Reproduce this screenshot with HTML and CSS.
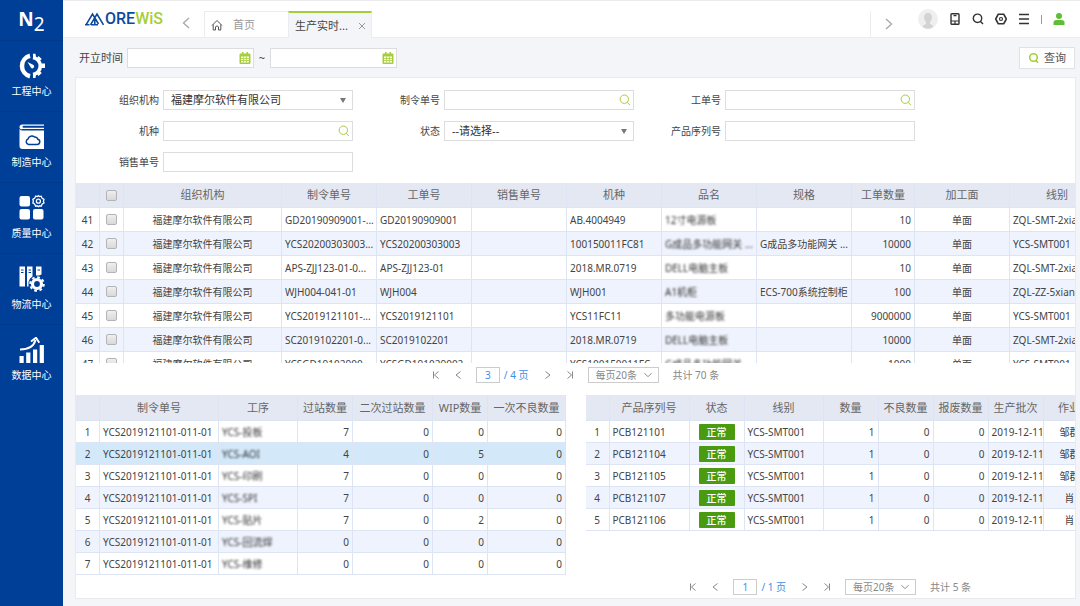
FILE: index.html
```html
<!DOCTYPE html>
<html lang="zh-CN">

<head>
    <meta charset="UTF-8">
    <meta name="viewport" content="width=device-width, initial-scale=1.0">
    <title>生产实时查询</title>
    <link rel="stylesheet" href="styles.css">
</head>

<body>
    <svg class="defs" aria-hidden="true">
        <symbol id="i-search" viewBox="0 0 12 12">
            <circle cx="5.3" cy="5.2" r="4.2" fill="none" stroke="currentColor" />
            <path d="M8.3 8.4l2.5 2.6" fill="none" stroke="currentColor" />
        </symbol>
        <symbol id="i-calendar" viewBox="0 0 12 12">
            <path d="M1.5 1.5H3V0h1.5v1.5h3V0H9v1.5h1.5q1 0 1 1v8.500q0 1-1 1h-9q-1 0-1-1V2.500q0-1 1-1z" fill="currentColor" />
            <path d="M2 4.500h8v6H2z" fill="#fff" />
            <path d="M2 6.500h8M2 8.500h8M4.600 4.500v6M7.400 4.500v6" stroke="currentColor" stroke-width=".8" />
        </symbol>
        <symbol id="i-left" viewBox="0 0 8 12">
            <path d="M7 1L1.500 6 7 11" fill="none" stroke="currentColor" stroke-width="1.400" />
        </symbol>
        <symbol id="i-right" viewBox="0 0 8 12">
            <path d="M1 1l5.500 5L1 11" fill="none" stroke="currentColor" stroke-width="1.400" />
        </symbol>
        <symbol id="i-first" viewBox="0 0 8 8">
            <path d="M1.500.5v7M6.500.5L2.500 4l4 3.500" fill="none" stroke="currentColor" />
        </symbol>
        <symbol id="i-last" viewBox="0 0 8 8">
            <path d="M6.500.5v7M1.500.5l4 3.500-4 3.500" fill="none" stroke="currentColor" />
        </symbol>
        <symbol id="i-prev" viewBox="0 0 8 8">
            <path d="M6.500.5l-4.500 3.500 4.500 3.500" fill="none" stroke="currentColor" />
        </symbol>
        <symbol id="i-next" viewBox="0 0 8 8">
            <path d="M1.500.5L6 4 1.500 7.500" fill="none" stroke="currentColor" />
        </symbol>
        <symbol id="i-down" viewBox="0 0 8 8">
            <path d="M.5 2.200L4 5.700l3.500-3.500" fill="none" stroke="currentColor" />
        </symbol>
    </svg>

    <nav class="sidebar">
        <div class="brand">N<sub>2</sub></div>
        <a href="#" class="nav-item">
            <svg viewBox="0 0 26 26">
                <path d="M11 2.800A10.500 10.500 0 0 0 11 23.200" fill="none" stroke="#fff" stroke-width="4.500" />
                <path d="M14 4.500A8.600 8.600 0 0 1 14 21.500" fill="none" stroke="#fff" stroke-width="3.600" />
                <path d="M14 .8h2.500l.6 4H14zM19.500 3l3.300 3-3 2.500-2.500-2.500zM21 10.500h5v4.500h-5zM19.800 17.500l3 2.500-3.300 3-2.500-3zM14 21h3l-.5 4H14z" fill="#fff" />
                <path d="M8.500 9l6 3a1.800 1.800 0 1 1-2.500 2.800z" fill="#fff" />
            </svg>
            <span>工程中心</span>
        </a>
        <a href="#" class="nav-item">
            <svg viewBox="0 0 26 26">
                <path d="M3.500.5H25v1.200H4.500a1 1 0 0 0 0 2H25V5H3.500A2 2 0 0 1 .5 3Q.5.500 3.500.5z" fill="#fff" />
                <path d="M.5 5q1 1.500 3 1.500H25V25H3.500Q.5 25 .5 22z" fill="#fff" />
                <path d="M9.500 20.500h8.500a2.700 2.700 0 0 0 .8-5.300 3 3 0 0 0-3.300-2.200 4 4 0 0 0-6.500 2 2.900 2.900 0 0 0 .5 5.500z" fill="none" stroke="#003f98" stroke-width="1.500" />
            </svg>
            <span>制造中心</span>
        </a>
        <a href="#" class="nav-item">
            <svg viewBox="0 0 26 26">
                <rect x=".5" y="1" width="10.500" height="10.500" rx="2" fill="#fff" />
                <rect x=".5" y="14" width="10.500" height="10.500" rx="2" fill="#fff" />
                <rect x="14" y="14" width="10.500" height="10.500" rx="2" fill="#fff" />
                <path d="M16.600 1.200l1.600.4 1.200-.9 1.200.9 1.600-.4 1 2.200 1.800 1-.6 1.800.6 1.800-1.800 1-1 2.200-1.600-.4-1.200.9-1.200-.9-1.600.4-1-2.200-1.800-1 .6-1.800-.6-1.800 1.800-1z" fill="none" stroke="#fff" stroke-width="1.300" />
                <circle cx="19.400" cy="6.200" r="2" fill="none" stroke="#fff" stroke-width="1.300" />
            </svg>
            <span>质量中心</span>
        </a>
        <a href="#" class="nav-item">
            <svg viewBox="0 0 26 26">
                <path d="M.5.5H6v20H.5zM8 .5h5.500v10L11 12.500 9.500 16v4.500H8zM17 .5h5.500v8L20 9.500h-3z" fill="#fff" />
                <path d="M2 4h2.500M2 6.500h2.500M9.500 4H12M9.500 6.500H12M18.500 4H21" stroke="#003f98" />
                <circle cx="18" cy="18" r="4.500" fill="none" stroke="#fff" stroke-width="3.200" />
                <circle cx="18" cy="18" r="6.800" fill="none" stroke="#fff" stroke-width="2" stroke-dasharray="2.700 2.640" />
            </svg>
            <span>物流中心</span>
        </a>
        <a href="#" class="nav-item">
            <svg viewBox="0 0 26 26">
                <path d="M.5 19h4.200v7H.500zM7.200 15.500h4.200V26H7.200zM14 12.500h4.200V26H14zM20.700 8h4.200v18h-4.200z" fill="#fff" />
                <path d="M1 12.500Q14 12.500 16.500 3" fill="none" stroke="#fff" stroke-width="2" />
                <path d="M12 4.500L17 .8l3.300 5" fill="none" stroke="#fff" stroke-width="2" />
            </svg>
            <span>数据中心</span>
        </a>
    </nav>

    <div class="main">
        <header class="topbar">
            <a href="#" class="logo">
                <svg viewBox="0 0 20 14">
                    <path d="M1 12.800L7.500 2l6 10M5.500 12.800L12 2l6.500 10.800M0 12.800h4.500M6 12.800h7M9.800 7v5" fill="none" stroke="#0d4a9e" stroke-width="1.600" />
                </svg>
                <span class="logo-more">ORE</span><span class="logo-wis">WiS</span>
            </a>
            <button class="tab-scroll" aria-label="向左"><svg><use href="#i-left" /></svg></button>
            <div class="tabs">
                <a href="#" class="tab">
                    <svg viewBox="0 0 12 12">
                        <path d="M1 6.500L6 1.500l5 5M2.200 5.500V11h2.300V7.800q1.500-1.800 3 0V11h2.300V5.500" fill="none" stroke="#555" />
                    </svg>
                    <span>首页</span>
                </a>
                <div class="tab active">
                    <a href="#">生产实时...</a>
                    <button class="tab-close" aria-label="关闭">
                        <svg viewBox="0 0 8 8"><path d="M1 1l6 6M7 1L1 7" stroke="#999" /></svg>
                    </button>
                </div>
            </div>
            <div class="tools">
                <button class="tab-scroll" aria-label="向右"><svg><use href="#i-right" /></svg></button>
                <svg class="avatar" viewBox="0 0 20 20">
                    <circle cx="10" cy="10" r="10" fill="#efefef" />
                    <path d="M10 4q4 0 4 4.500 0 3-2 4.500v2l3 1.500v1.800a9.500 9.500 0 0 1-10 0V16.500L8 15v-2Q6 11.500 6 8.500 6 4 10 4z" fill="#d3d3d3" />
                </svg>
                <button class="tool" aria-label="手机">
                    <svg viewBox="0 0 12 12">
                        <rect x="2" y=".8" width="8" height="10.400" rx=".8" fill="none" stroke="#333" stroke-width="1.400" />
                        <path d="M2 8h8M4.500 2.700h3M6 8v3" stroke="#333" stroke-width="1.200" />
                    </svg>
                </button>
                <button class="tool" aria-label="搜索">
                    <svg viewBox="0 0 12 12">
                        <circle cx="5.500" cy="5.300" r="4.200" fill="none" stroke="#333" stroke-width="1.400" />
                        <path d="M8 8l3 3" stroke="#333" stroke-width="1.400" />
                    </svg>
                </button>
                <button class="tool" aria-label="设置">
                    <svg viewBox="0 0 12 12">
                        <path d="M3.300 1.200h5.400l1 1.800 1.700 3-1.700 3-1 1.800H3.300l-1-1.800L.6 6l1.700-3z" fill="none" stroke="#333" stroke-width="1.600" />
                        <circle cx="6" cy="6" r="1.500" fill="none" stroke="#333" stroke-width="1.200" />
                    </svg>
                </button>
                <button class="tool" aria-label="菜单">
                    <svg viewBox="0 0 12 12"><path d="M1 1.500h10M1 6h10M1 10.500h10" stroke="#333" stroke-width="1.400" /></svg>
                </button>
                <span class="divider"></span>
                <button class="tool" aria-label="用户">
                    <svg viewBox="0 0 12 12">
                        <circle cx="6" cy="3" r="3" fill="#5dbf35" />
                        <path d="M.5 12V9.500q0-2.500 3-2.500h5q3 0 3 2.500V12z" fill="#5dbf35" />
                    </svg>
                </button>
            </div>
        </header>

        <div class="toolbar">
            <label for="date-from">开立时间</label>
            <div class="field date">
                <input type="text" id="date-from">
                <svg><use href="#i-calendar" /></svg>
            </div>
            <span class="tilde">~</span>
            <div class="field date">
                <input type="text" id="date-to" aria-label="结束时间">
                <svg><use href="#i-calendar" /></svg>
            </div>
            <button class="query">
                <svg viewBox="0 0 12 12">
                    <circle cx="5.500" cy="5.500" r="3.800" fill="none" stroke="currentColor" stroke-width="1.600" />
                    <path d="M7.500 8l2.500 2.800" stroke="currentColor" stroke-width="1.600" />
                </svg>
                查询
            </button>
        </div>

        <main class="panel">
            <form class="filters">
                <div class="row">
                    <label for="org">组织机构</label>
                    <div class="field select"><select id="org"><option>福建摩尔软件有限公司</option></select></div>
                </div>
                <div class="row">
                    <label for="mo">制令单号</label>
                    <div class="field"><input type="text" id="mo"><svg><use href="#i-search" /></svg></div>
                </div>
                <div class="row">
                    <label for="wo">工单号</label>
                    <div class="field"><input type="text" id="wo"><svg><use href="#i-search" /></svg></div>
                </div>
                <div class="row">
                    <label for="model">机种</label>
                    <div class="field"><input type="text" id="model"><svg><use href="#i-search" /></svg></div>
                </div>
                <div class="row">
                    <label for="state">状态</label>
                    <div class="field select"><select id="state"><option>--请选择--</option></select></div>
                </div>
                <div class="row">
                    <label for="sn">产品序列号</label>
                    <div class="field"><input type="text" id="sn"></div>
                </div>
                <div class="row">
                    <label for="so">销售单号</label>
                    <div class="field"><input type="text" id="so"></div>
                </div>
            </form>

            <div class="grid-box">
                <table class="grid orders">
                    <colgroup>
                        <col class="w24"><col class="w24"><col class="w158"><col class="w95"><col class="w95"><col class="w95">
                        <col class="w95"><col class="w95"><col class="w95"><col class="w63"><col class="w95"><col class="w95">
                    </colgroup>
                    <thead>
                        <tr>
                            <th></th>
                            <th><input type="checkbox" aria-label="全选"></th>
                            <th>组织机构</th>
                            <th>制令单号</th>
                            <th>工单号</th>
                            <th>销售单号</th>
                            <th>机种</th>
                            <th>品名</th>
                            <th>规格</th>
                            <th>工单数量</th>
                            <th>加工面</th>
                            <th>线别</th>
                        </tr>
                    </thead>
                    <tbody>
                        <tr>
                            <td class="c">41</td>
                            <td class="c"><input type="checkbox" aria-label="选择41"></td>
                            <td class="c">福建摩尔软件有限公司</td>
                            <td>GD20190909001-...</td>
                            <td>GD20190909001</td>
                            <td></td>
                            <td>AB.4004949</td>
                            <td><span class="masked">12寸电源板</span></td>
                            <td></td>
                            <td class="n">10</td>
                            <td class="c">单面</td>
                            <td>ZQL-SMT-2xian</td>
                        </tr>
                        <tr>
                            <td class="c">42</td>
                            <td class="c"><input type="checkbox" aria-label="选择42"></td>
                            <td class="c">福建摩尔软件有限公司</td>
                            <td>YCS20200303003...</td>
                            <td>YCS20200303003</td>
                            <td></td>
                            <td>100150011FC81</td>
                            <td><span class="masked">G成品多功能网关 ...</span></td>
                            <td>G成品多功能网关 ...</td>
                            <td class="n">10000</td>
                            <td class="c">单面</td>
                            <td>YCS-SMT001</td>
                        </tr>
                        <tr>
                            <td class="c">43</td>
                            <td class="c"><input type="checkbox" aria-label="选择43"></td>
                            <td class="c">福建摩尔软件有限公司</td>
                            <td>APS-ZJJ123-01-0...</td>
                            <td>APS-ZJJ123-01</td>
                            <td></td>
                            <td>2018.MR.0719</td>
                            <td><span class="masked">DELL电脑主板</span></td>
                            <td></td>
                            <td class="n">10</td>
                            <td class="c">单面</td>
                            <td>ZQL-SMT-2xian</td>
                        </tr>
                        <tr>
                            <td class="c">44</td>
                            <td class="c"><input type="checkbox" aria-label="选择44"></td>
                            <td class="c">福建摩尔软件有限公司</td>
                            <td>WJH004-041-01</td>
                            <td>WJH004</td>
                            <td></td>
                            <td>WJH001</td>
                            <td><span class="masked">A1机柜</span></td>
                            <td>ECS-700系统控制柜</td>
                            <td class="n">100</td>
                            <td class="c">单面</td>
                            <td>ZQL-ZZ-5xian</td>
                        </tr>
                        <tr>
                            <td class="c">45</td>
                            <td class="c"><input type="checkbox" aria-label="选择45"></td>
                            <td class="c">福建摩尔软件有限公司</td>
                            <td>YCS2019121101-...</td>
                            <td>YCS2019121101</td>
                            <td></td>
                            <td>YCS11FC11</td>
                            <td><span class="masked">多功能电源板</span></td>
                            <td></td>
                            <td class="n">9000000</td>
                            <td class="c">单面</td>
                            <td>YCS-SMT001</td>
                        </tr>
                        <tr>
                            <td class="c">46</td>
                            <td class="c"><input type="checkbox" aria-label="选择46"></td>
                            <td class="c">福建摩尔软件有限公司</td>
                            <td>SC2019102201-0...</td>
                            <td>SC2019102201</td>
                            <td></td>
                            <td>2018.MR.0719</td>
                            <td><span class="masked">DELL电脑主板</span></td>
                            <td></td>
                            <td class="n">10000</td>
                            <td class="c">单面</td>
                            <td>ZQL-SMT-2xian</td>
                        </tr>
                        <tr>
                            <td class="c">47</td>
                            <td class="c"><input type="checkbox" aria-label="选择47"></td>
                            <td class="c">福建摩尔软件有限公司</td>
                            <td>YCSGD19102900...</td>
                            <td>YCSGD191029002</td>
                            <td></td>
                            <td>YCS100150011FC...</td>
                            <td><span class="masked">G成品多功能网关</span></td>
                            <td></td>
                            <td class="n">1000</td>
                            <td class="c">单面</td>
                            <td>YCS-SMT001</td>
                        </tr>
                    </tbody>
                </table>
            </div>
            <div class="pager">
                <button aria-label="首页"><svg><use href="#i-first" /></svg></button>
                <button aria-label="上一页"><svg><use href="#i-prev" /></svg></button>
                <input type="text" class="page-no" value="3" aria-label="页码">
                <span class="pages">/ 4 页</span>
                <button aria-label="下一页"><svg><use href="#i-next" /></svg></button>
                <button aria-label="末页"><svg><use href="#i-last" /></svg></button>
                <div class="page-size"><select aria-label="每页条数"><option>每页20条</option></select><svg><use href="#i-down" /></svg></div>
                <span class="total">共计 70 条</span>
            </div>

            <div class="details">
                <section class="stations">
                    <div class="grid-box">
                        <table class="grid small">
                            <colgroup>
                                <col class="w24"><col class="w119"><col class="w79"><col class="w55"><col class="w80"><col class="w55"><col class="w78">
                            </colgroup>
                            <thead>
                                <tr>
                                    <th></th>
                                    <th>制令单号</th>
                                    <th>工序</th>
                                    <th>过站数量</th>
                                    <th>二次过站数量</th>
                                    <th>WIP数量</th>
                                    <th>一次不良数量</th>
                                </tr>
                            </thead>
                            <tbody>
                                <tr>
                                    <td class="c">1</td><td>YCS2019121101-011-01</td><td><span class="masked">YCS-投板</span></td>
                                    <td class="n">7</td><td class="n">0</td><td class="n">0</td><td class="n">0</td>
                                </tr>
                                <tr class="selected">
                                    <td class="c">2</td><td>YCS2019121101-011-01</td><td><span class="masked">YCS-AOI</span></td>
                                    <td class="n">4</td><td class="n">0</td><td class="n">5</td><td class="n">0</td>
                                </tr>
                                <tr>
                                    <td class="c">3</td><td>YCS2019121101-011-01</td><td><span class="masked">YCS-印刷</span></td>
                                    <td class="n">7</td><td class="n">0</td><td class="n">0</td><td class="n">0</td>
                                </tr>
                                <tr>
                                    <td class="c">4</td><td>YCS2019121101-011-01</td><td><span class="masked">YCS-SPI</span></td>
                                    <td class="n">7</td><td class="n">0</td><td class="n">0</td><td class="n">0</td>
                                </tr>
                                <tr>
                                    <td class="c">5</td><td>YCS2019121101-011-01</td><td><span class="masked">YCS-贴片</span></td>
                                    <td class="n">7</td><td class="n">0</td><td class="n">2</td><td class="n">0</td>
                                </tr>
                                <tr>
                                    <td class="c">6</td><td>YCS2019121101-011-01</td><td><span class="masked">YCS-回流焊</span></td>
                                    <td class="n">0</td><td class="n">0</td><td class="n">0</td><td class="n">0</td>
                                </tr>
                                <tr>
                                    <td class="c">7</td><td>YCS2019121101-011-01</td><td><span class="masked">YCS-维修</span></td>
                                    <td class="n">0</td><td class="n">0</td><td class="n">0</td><td class="n">0</td>
                                </tr>
                            </tbody>
                        </table>
                    </div>
                </section>

                <section class="products">
                    <div class="grid-box">
                        <table class="grid small">
                            <colgroup>
                                <col class="w24"><col class="w80"><col class="w55"><col class="w79"><col class="w55"><col class="w55"><col class="w55"><col class="w55"><col class="w63">
                            </colgroup>
                            <thead>
                                <tr>
                                    <th></th>
                                    <th>产品序列号</th>
                                    <th>状态</th>
                                    <th>线别</th>
                                    <th>数量</th>
                                    <th>不良数量</th>
                                    <th>报废数量</th>
                                    <th>生产批次</th>
                                    <th>作业员</th>
                                </tr>
                            </thead>
                            <tbody>
                                <tr>
                                    <td class="c">1</td><td>PCB121101</td><td class="c"><span class="badge">正常</span></td><td>YCS-SMT001</td>
                                    <td class="n">1</td><td class="n">0</td><td class="n">0</td><td>2019-12-11</td><td class="c">邹群英</td>
                                </tr>
                                <tr>
                                    <td class="c">2</td><td>PCB121104</td><td class="c"><span class="badge">正常</span></td><td>YCS-SMT001</td>
                                    <td class="n">1</td><td class="n">0</td><td class="n">0</td><td>2019-12-11</td><td class="c">邹群英</td>
                                </tr>
                                <tr>
                                    <td class="c">3</td><td>PCB121105</td><td class="c"><span class="badge">正常</span></td><td>YCS-SMT001</td>
                                    <td class="n">1</td><td class="n">0</td><td class="n">0</td><td>2019-12-11</td><td class="c">邹群英</td>
                                </tr>
                                <tr>
                                    <td class="c">4</td><td>PCB121107</td><td class="c"><span class="badge">正常</span></td><td>YCS-SMT001</td>
                                    <td class="n">1</td><td class="n">0</td><td class="n">0</td><td>2019-12-11</td><td class="c">肖勇</td>
                                </tr>
                                <tr>
                                    <td class="c">5</td><td>PCB121106</td><td class="c"><span class="badge">正常</span></td><td>YCS-SMT001</td>
                                    <td class="n">1</td><td class="n">0</td><td class="n">0</td><td>2019-12-11</td><td class="c">肖勇</td>
                                </tr>
                            </tbody>
                        </table>
                    </div>
                    <div class="pager">
                        <button aria-label="首页"><svg><use href="#i-first" /></svg></button>
                        <button aria-label="上一页"><svg><use href="#i-prev" /></svg></button>
                        <input type="text" class="page-no" value="1" aria-label="页码">
                        <span class="pages">/ 1 页</span>
                        <button aria-label="下一页"><svg><use href="#i-next" /></svg></button>
                        <button aria-label="末页"><svg><use href="#i-last" /></svg></button>
                        <div class="page-size"><select aria-label="每页条数"><option>每页20条</option></select><svg><use href="#i-down" /></svg></div>
                        <span class="total">共计 5 条</span>
                    </div>
                </section>
            </div>
        </main>
    </div>
</body>

</html>
```
FILE: styles.css
```css
* {
    box-sizing: border-box;
}

body {
    display: flex;
    min-height: 100vh;
    margin: 0;
    background: #f4f5f8;
    color: #444;
    font-family: "Noto Sans", "Noto Sans CJK SC", sans-serif;
    font-size: 10px;
    line-height: 16px;
}

a {
    color: inherit;
    text-decoration: none;
}

button,
input,
select {
    margin: 0;
    padding: 0;
    border: none;
    background: none;
    color: inherit;
    font: inherit;
}

svg {
    display: block;
    flex: none;
}

.defs {
    position: absolute;
    width: 0;
    height: 0;
}

/* sidebar */
.sidebar {
    flex: 0 0 63px;
    background: #003f98;
    color: #fff;
}

.brand {
    height: 40px;
    font-size: 19px;
    font-weight: 700;
    line-height: 38px;
    text-align: center;
}

.brand sub {
    font-size: 19px;
    font-weight: 400;
    line-height: 0;
    vertical-align: -5px;
}

.nav-item {
    display: flex;
    flex-direction: column;
    align-items: center;
    gap: 4px;
    height: 71px;
    padding-top: 12px;
    border-top: 1px solid #00388a;
}

.nav-item svg {
    width: 26px;
    height: 26px;
}

/* top bar */
.main {
    display: flex;
    flex: 1;
    flex-direction: column;
    min-width: 0;
}

.topbar {
    display: flex;
    height: 38px;
    border-top: 1px solid #ececee;
    border-bottom: 1px solid #ececee;
    background: #fff;
}

.logo {
    display: flex;
    align-items: center;
    width: 110px;
    padding-left: 22px;
    font-family: Roboto, sans-serif;
    font-size: 16px;
    font-weight: 500;
}

.logo svg {
    width: 20px;
    height: 14px;
}

.logo-more {
    color: #0d4a9e;
}

.logo-wis {
    color: #a6ce39;
}

.tab-scroll {
    display: flex;
    align-items: center;
    justify-content: center;
    width: 26px;
    padding-top: 8px;
    color: #aaa;
}

.tab-scroll svg {
    width: 8px;
    height: 12px;
}

.tabs {
    display: flex;
    flex: 1;
    margin-top: 10px;
    margin-left: 5px;
    margin-bottom: -1px;
    font-size: 11px;
}

.tab {
    display: flex;
    align-items: center;
    gap: 10px;
    width: 84px;
    padding-left: 6px;
    border-top: 1px solid #ececee;
    border-left: 1px solid #ececee;
    color: #999;
}

.tab svg {
    width: 12px;
    height: 12px;
}

.tab.active {
    border-top: 2px solid #a6ce39;
    border-right: 1px solid #ececee;
    background: #f4f5f8;
    color: #444;
}

.tab .tab-close svg {
    width: 8px;
    height: 8px;
}

.tools {
    display: flex;
    align-items: center;
    gap: 11px;
    padding-right: 15px;
}

.tools .tab-scroll {
    align-self: stretch;
    width: 37px;
    margin-top: 10px;
    padding-top: 0;
    border-left: 1px solid #ececee;
}

.avatar {
    width: 20px;
    height: 20px;
}

.tool svg {
    width: 12px;
    height: 12px;
}

.divider {
    height: 9px;
    border-left: 1px solid #999;
}

/* date range and query button */
.toolbar {
    display: flex;
    align-items: center;
    gap: 4px;
    height: 39px;
    padding: 0 5px 0 16px;
    font-size: 11px;
}

.tilde {
    width: 8px;
    text-align: center;
}

.field {
    display: flex;
    align-items: center;
    width: 190px;
    height: 20px;
    padding-right: 2px;
    border: 1px solid #ddd;
    background: #fff;
    color: #a6ce39;
}

.field input {
    flex: 1;
    min-width: 0;
    height: 18px;
    padding: 0 7px;
    color: #444;
}

.field svg {
    width: 12px;
    height: 12px;
}

.date {
    width: 127px;
}

.query {
    display: flex;
    align-items: center;
    gap: 4px;
    height: 22px;
    margin-left: auto;
    padding: 0 8px;
    border: 1px solid #e2e2e4;
    background: #fff;
    color: #555;
}

.query svg {
    width: 12px;
    height: 12px;
    color: #a6ce39;
}

/* content */
.panel {
    flex: 1;
    margin: 0 4px 7px 12px;
    border: 1px solid #e9eaed;
    background: #fff;
}

.filters {
    display: grid;
    grid-template-columns: repeat(3, 277px);
    gap: 11px 4px;
    padding: 12px 0 11px;
}

.row {
    display: flex;
    align-items: center;
    justify-content: flex-end;
    gap: 4px;
}

.field select {
    flex: 1;
    height: 18px;
    padding-left: 7px;
    appearance: none;
    color: #333;
    font-size: 11px;
}

.select::after {
    content: "";
    margin-right: 4px;
    border: 3px solid transparent;
    border-top: 5px solid #777;
    border-bottom: none;
}

.grid-box {
    height: 180px;
    overflow: hidden;
}

.grid {
    width: 0;
    border-collapse: separate;
    border-spacing: 0;
    table-layout: fixed;
}

.w24 { width: 24px; }
.w55 { width: 55px; }
.w63 { width: 63px; }
.w78 { width: 78px; }
.w79 { width: 79px; }
.w80 { width: 80px; }
.w95 { width: 95px; }
.w119 { width: 119px; }
.w158 { width: 158px; }

.grid th,
.grid td {
    height: 24px;
    padding: 0 3px;
    overflow: hidden;
    border-right: 1px solid #dde4f3;
    border-bottom: 1px solid #dde4f3;
    text-align: left;
    white-space: nowrap;
}

.grid th {
    height: 25px;
    padding: 0;
    background: #e4e8f3;
    color: #666;
    font-size: 11px;
    font-weight: 400;
    text-align: center;
}

.small td {
    height: 22px;
}

.small th {
    height: 26px;
}

.grid tbody tr:nth-child(even) {
    background: #eff3fd;
}

.grid tbody tr.selected {
    background: #d3e9fa;
}

.grid .c {
    padding: 0;
    text-align: center;
}

.grid .n {
    text-align: right;
}

.grid input {
    display: block;
    width: 11px;
    height: 11px;
    margin: 0 auto;
    appearance: none;
    border: 1px solid #b4b4b4;
    border-radius: 2px;
    background: linear-gradient(#eee, #d9d9d9);
}

.masked {
    color: #333;
    filter: blur(1px);
}

.badge {
    display: block;
    width: 36px;
    margin: 0 auto;
    border-radius: 1px;
    background: #4a9b0f;
    color: #fff;
    font-weight: 500;
}

/* pager */
.pager {
    display: flex;
    align-items: center;
    justify-content: center;
    height: 16px;
    margin-top: 4px;
    color: #888;
}

.pager button {
    width: 8px;
    margin-right: 14px;
}

.pager svg {
    width: 8px;
    height: 8px;
}

.page-no {
    width: 24px;
    height: 16px;
    border: 1px solid #ccc;
    color: #3d8ee8;
    text-align: center;
}

.pages {
    margin: 0 15px 0 4px;
    color: #3d8ee8;
}

.page-size {
    display: flex;
    align-items: center;
    width: 71px;
    height: 16px;
    margin-right: 14px;
    padding-right: 6px;
    border: 1px solid #ccc;
}

.page-size select {
    flex: 1;
    min-width: 0;
    height: 14px;
    padding-left: 7px;
    appearance: none;
    line-height: 14px;
}

/* lower tables */
.details {
    display: flex;
    gap: 20px;
    margin-top: 12px;
}

.stations {
    flex: 0 0 49%;
    min-width: 0;
}

.products {
    flex: 1;
    min-width: 0;
}
```
